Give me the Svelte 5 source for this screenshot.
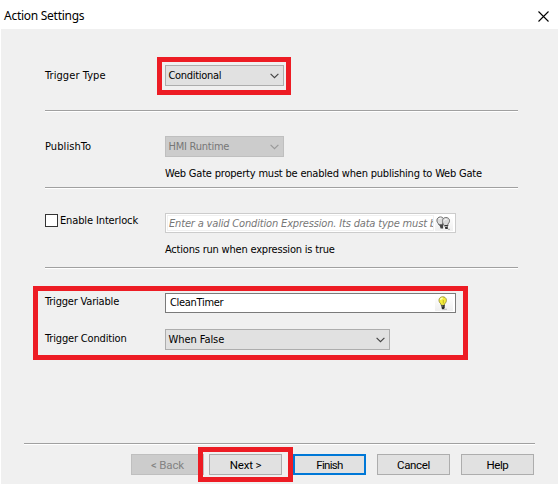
<script>
  const buttons = [
    { id: 'back', label: '< Back', disabled: true },
    { id: 'next', label: 'Next >', marked: true },
    { id: 'finish', label: 'Finish', primary: true },
    { id: 'cancel', label: 'Cancel' },
    { id: 'help', label: 'Help' }
  ];
</script>

{#snippet chevron()}
  <svg class="chevron" width="9" height="6" viewBox="0 0 9 6"><path d="M.6 .8 4.5 4.6 8.4 .8" fill="none" stroke="currentColor" stroke-width="1.15" /></svg>
{/snippet}

<div class="dialog">
  <header>
    <span class="title">Action Settings</span>
    <svg class="close" width="11" height="11" viewBox="0 0 11 11"><path d="M.5 .5 10.5 10.5M10.5 .5 .5 10.5" stroke="#000" stroke-width="1.1" /></svg>
  </header>

  <main>
    <section class="type">
      <div class="row">
        <span class="label low t-type">Trigger Type</span>
        <div class="select short marked"><span class="t-conditional">Conditional</span>{@render chevron()}</div>
      </div>
    </section>

    <section class="publish">
      <div class="row">
        <span class="label low t-publish">PublishTo</span>
        <div class="select short disabled"><span class="t-hmi">HMI Runtime</span>{@render chevron()}</div>
      </div>
      <p class="hint">Web Gate property must be enabled when publishing to Web Gate</p>
    </section>

    <section class="interlock">
      <div class="row">
        <div class="label check"><i class="box"></i><span class="t-enable">Enable Interlock</span></div>
        <div class="field muted">
          <div class="entry"><em>Enter a valid Condition Expression. Its data type must be</em></div>
          <div class="bulb">
            <svg width="16" height="14" viewBox="0 0 16 14">
              <path d="M2.2 7.500C-.2 4.800 1 1 4.400 1s4.800 3.800 2.200 6.200V9H3z" fill="#ddd" stroke="#555" stroke-width=".9" />
              <path d="M3 3q1-1.300 2.300-.8" stroke="#fff" fill="none" />
              <path d="M3.300 8.600h3.800v4H4.600z" fill="#444" />
              <path d="M7.200 7.800C5.500 4.800 6.700 1.500 9.900 1.500c3.800 0 4.900 3.900 2 6.500v2H8.400z" fill="#d8d8d8" stroke="#666" stroke-width=".9" />
              <path d="M8.300 4.300q.8-1.300 2.300-.8" stroke="#fff" fill="none" />
              <path d="M8.600 9h3.200v4H9.300z" fill="#333" />
              <path d="M9 10.500h2.500M12 13.300h2" stroke="#aaa" />
            </svg>
          </div>
        </div>
      </div>
      <p class="hint">Actions run when expression is true</p>
    </section>

    <section class="trigger">
      <div class="row">
        <span class="label high t-variable">Trigger Variable</span>
        <div class="field">
          <div class="entry"><span class="t-clean">CleanTimer</span></div>
          <div class="bulb lit">
            <svg width="10" height="14" viewBox="0 0 10 14">
              <path d="M3 8C-.4 5.200 .8 .8 4.700 .8S9.800 5.200 6.500 8v1.300H3z" fill="#f4ee3c" stroke="#98913a" stroke-width=".9" />
              <path d="M2.500 4Q3 2 4.700 2.300" fill="none" stroke="#ffffc5" stroke-width="1.300" />
              <path d="M5.300 4v3.500" stroke="#b7a41e" stroke-width=".8" />
              <path d="M3 9h3.700v2.700l-.8 1.500H4z" fill="#292929" />
              <path d="M3.300 10h2M6 13.300h3" stroke="#aaa" stroke-width=".8" />
            </svg>
          </div>
        </div>
      </div>
      <div class="row condition">
        <span class="label t-condition">Trigger Condition</span>
        <div class="select long"><span class="t-when">When False</span>{@render chevron()}</div>
      </div>
    </section>
  </main>

  <footer>
    {#each buttons as b (b.id)}
      <div class="action {b.id}" class:marked={b.marked}>
        <button class:primary={b.primary} disabled={b.disabled}>{b.label}</button>
      </div>
    {/each}
  </footer>
</div>

<style>
  :global(body) { margin: 0; background: #fff; }
  * { box-sizing: border-box; }
  .dialog {
    width: 558px; height: 484px; overflow: hidden; display: flex; flex-direction: column;
    padding-left: 1px; background: #fff; color: #000;
    font: 11px/14px "DejaVu Sans Condensed", "DejaVu Sans", sans-serif; font-stretch: condensed;
    white-space: nowrap;
  }
  header {
    flex: none; height: 29px; padding: 2px 9px 0 3px; display: flex; align-items: center;
    justify-content: space-between; font: 12px/16px "Noto Sans", sans-serif;
  }
  .title { letter-spacing: -.27px; }
  .close { display: block; margin-top: 1px; }
  main { flex: none; height: 414px; background: #f0f0f0; padding: 0 40px 0 44px; display: flex; flex-direction: column; }
  section { flex: none; border-bottom: 1px solid #a0a0a0; box-shadow: 1px 1px #fff; clip-path: inset(-20px -1px -1px -20px); }
  .type { height: 82px; padding-top: 36px; box-shadow: 0 1px #fff; }
  .publish { height: 77px; padding-top: 25px; box-shadow: 0 1px #fff; }
  .interlock { height: 80px; padding-top: 25px; box-shadow: 0 1px #fff; }
  .trigger {
    height: 74px; border: 5px solid #ed1c24; box-shadow: none; clip-path: none;
    width: 435px; margin: 18px 0 0 -12px; padding: 2px 0 0 7px;
  }
  .row { display: flex; align-items: flex-start; }
  .label { flex: none; width: 120px; height: 20px; line-height: 20px; }
  .low { line-height: 22px; }
  .high { line-height: 18px; }
  .condition { margin-top: 16px; }
  .select {
    position: relative; height: 21px; border: 1px solid #adadad; background: #e1e1e1;
    display: flex; align-items: center; justify-content: space-between; padding: 1px 4px 0 2.5px;
  }
  .short { width: 119px; }
  .long { width: 225px; }
  .chevron { display: block; color: #444; }
  .disabled { background: #ccc; border-color: #bfbfbf; color: #777; }
  .disabled .chevron { color: #999; }
  .hint { margin: 10px 0 0 120px; line-height: 14px; letter-spacing: -.2px; }
  .t-type, .t-publish { letter-spacing: .08px; }
  .t-conditional, .t-clean { letter-spacing: -.3px; }
  .t-hmi { letter-spacing: -.24px; }
  .t-enable { letter-spacing: -.13px; }
  .t-variable { letter-spacing: -.19px; }
  .t-condition { letter-spacing: -.16px; }
  .t-when { letter-spacing: -.06px; }
  .check { display: flex; align-items: center; gap: 2px; padding-right: 4px; height: 15px; }
  .box { flex: none; width: 13px; height: 13px; border: 1px solid #333; background: #fff; }
  .field {
    width: 291px; height: 20px; border: 1px solid #7a7a7a; background: #fff; display: flex;
    align-items: center; padding: 1px 2px 1px 1px;
  }
  .muted { border-color: #ccc; }
  .entry { width: 268px; height: 16px; padding: 1px 0 0 3px; overflow: hidden; }
  .muted .entry { border: 1px solid #f0f0f0; padding: 0 0 0 1px; line-height: 15px; }
  em { color: #777; letter-spacing: -.17px; }
  .bulb { width: 18px; height: 15px; display: flex; justify-content: center; background: linear-gradient(#fff, #efefef); margin-left: 1px; }
  .lit { padding-right: 2px; }
  .bulb svg { display: block; }
  .marked { position: relative; }
  .marked::after { content: ""; position: absolute; border: 5px solid #ed1c24; pointer-events: none; }
  .select.marked::after { inset: -9px -8px -10px -9px; }
  footer {
    flex: none; height: 41px; background: #f0f0f0; padding: 11px 23px 0 130px; display: flex;
    position: relative;
  }
  footer::before { content: ""; position: absolute; left: 23px; right: 23px; top: 0; height: 1px; background: #a0a0a0; box-shadow: 0 1px #fff; }
  .action { flex: none; width: 73px; height: 21px; margin-right: 11px; }
  .back { margin-right: 5px; }
  .action.marked::after { inset: -7px -11px -7px -11px; }
  button {
    display: flex; align-items: center; justify-content: center; width: 73px; height: 21px; padding: 0;
    border: 1px solid #adadad; border-radius: 0; background: #e1e1e1; color: #000;
    font: 11.5px/16px Roboto, sans-serif; letter-spacing: -.15px;
  }
  button:disabled { background: #ccc; border-color: #bfbfbf; color: #838383; }
  button.primary { border: 2px solid #0078d7; }
  .finish button { letter-spacing: -.7px; }
  .cancel button { letter-spacing: -.35px; }
  .help button { letter-spacing: -.45px; }
</style>
